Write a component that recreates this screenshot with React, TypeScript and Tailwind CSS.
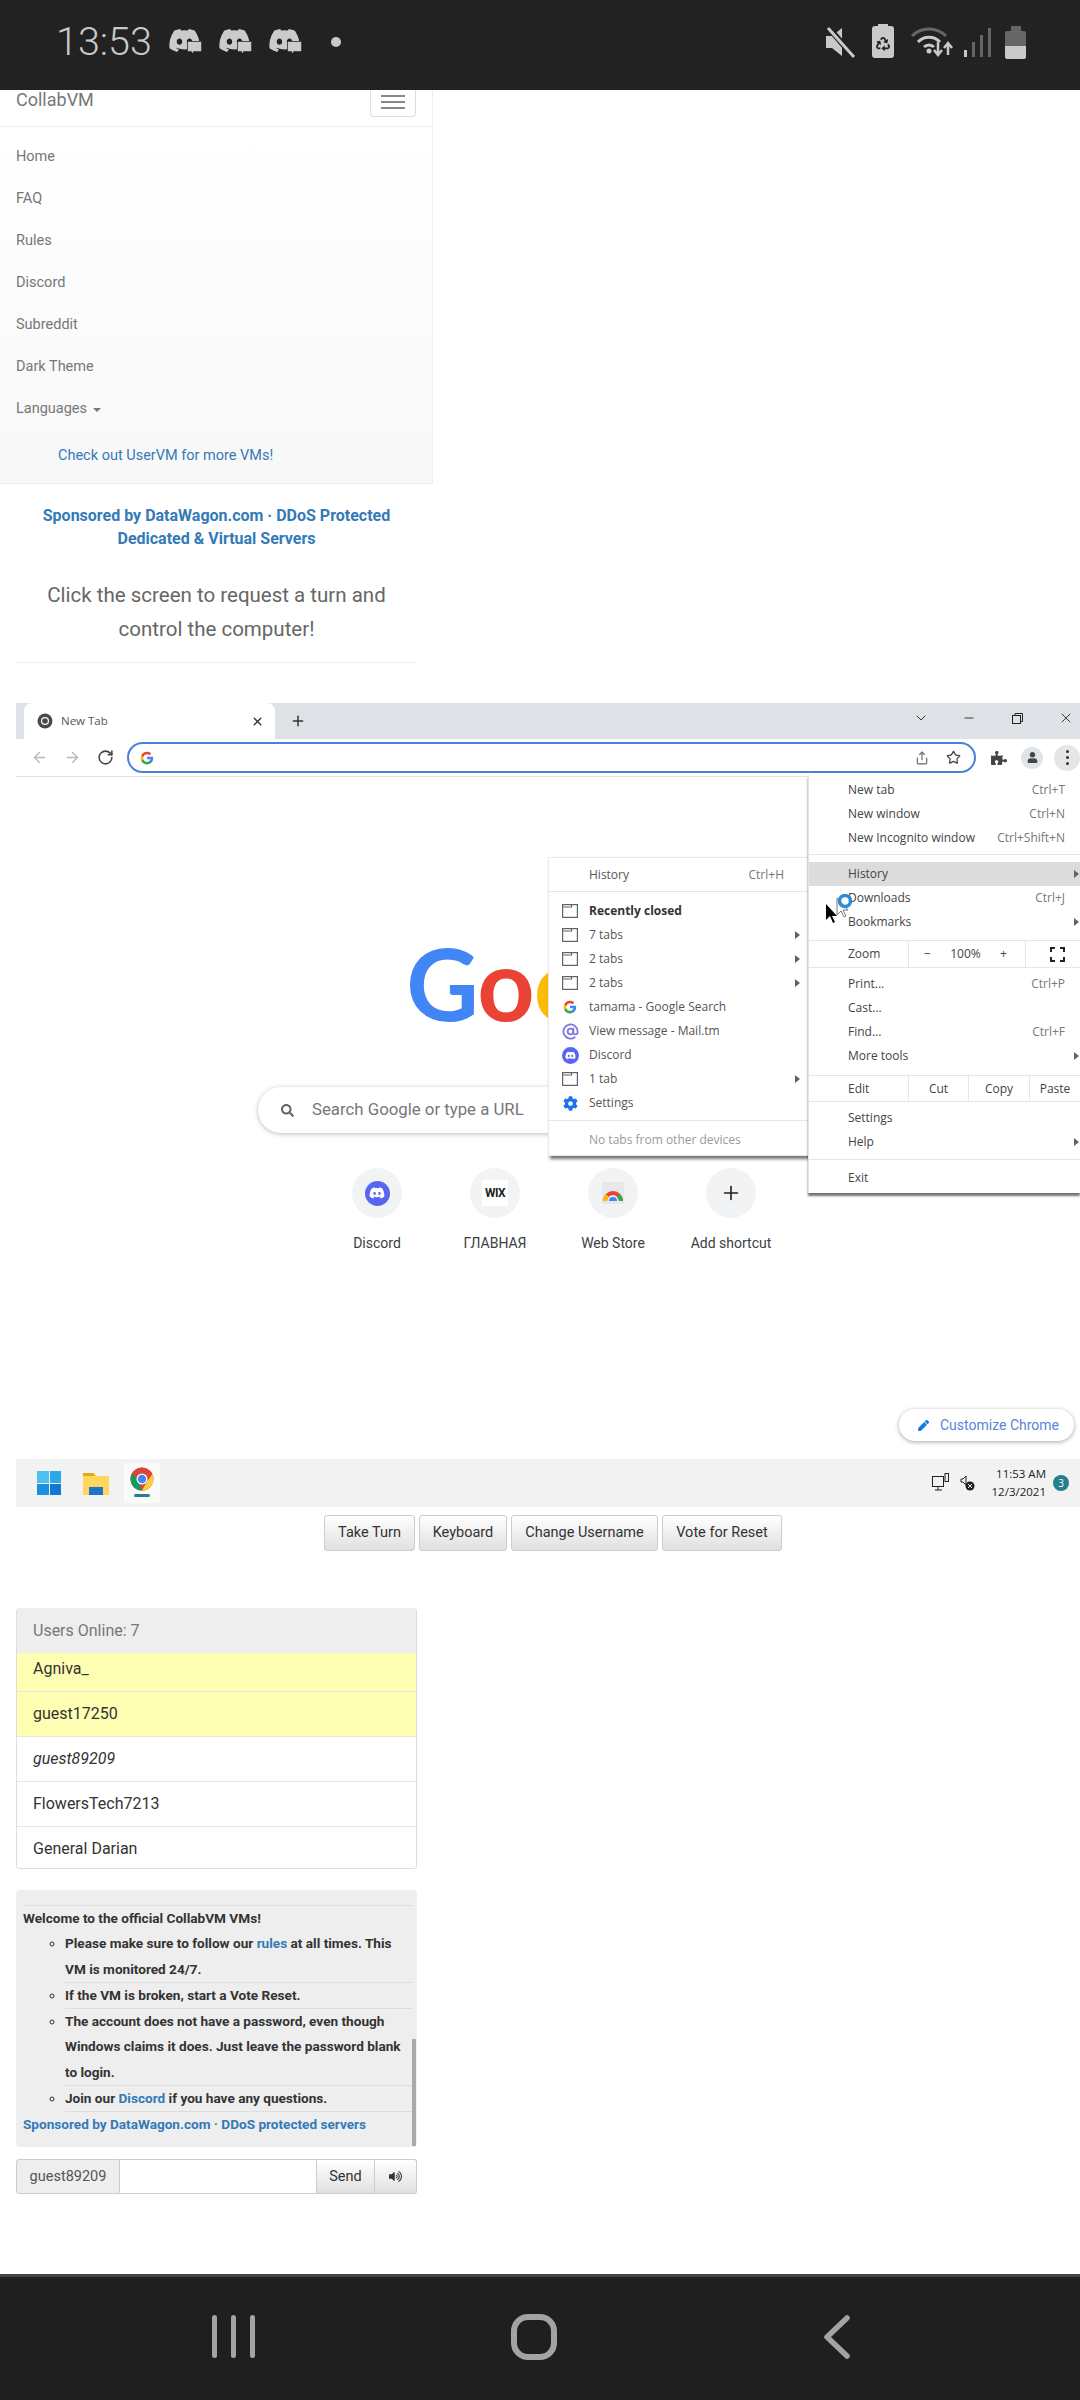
import React from "react"
import { FaDiscord, FaCog, FaVolumeUp, FaPuzzlePiece, FaUser, FaSearch, FaPen, FaRecycle } from "react-icons/fa"
import { ArrowLeft, ArrowRight, RotateCw, X, Plus, ChevronDown, Minus, Star, Share, AtSign } from "lucide-react"

const navLinks = ["Home", "FAQ", "Rules", "Discord", "Subreddit", "Dark Theme"]
const users = [
  { name: "Agniva_", cls: "bg-[#ffffb3] h-[39px] pb-[6px]" },
  { name: "guest17250", cls: "bg-[#ffffb3] h-[45px]" },
  { name: "guest89209", cls: "bg-white h-[45px] italic" },
  { name: "FlowersTech7213", cls: "bg-white h-[45px]" },
  { name: "General Darian", cls: "bg-white h-[41px] pt-[2px]" },
]
const shortcuts = ["Discord", "ГЛАВНАЯ", "Web Store", "Add shortcut"]
const actions = [
  { label: "Take Turn", w: "w-[91px]" },
  { label: "Keyboard", w: "w-[88px]" },
  { label: "Change Username", w: "w-[147px]" },
  { label: "Vote for Reset", w: "w-[120px]" },
]

const GoogleG = ({ size = 14 }: { size?: number }) => (
  <svg width={size} height={size} viewBox="0 0 48 48">
    <path fill="#4285F4" d="M45.1 24.5c0-1.6-.1-3.1-.4-4.5H24v8.5h11.8c-.5 2.7-2.1 5-4.4 6.6v5.5h7.1c4.2-3.8 6.6-9.5 6.6-16.1z" />
    <path fill="#34A853" d="M24 46c5.9 0 10.9-2 14.5-5.4l-7.1-5.5c-2 1.3-4.5 2.1-7.4 2.1-5.7 0-10.5-3.8-12.2-9H4.5v5.7C8.1 41.1 15.5 46 24 46z" />
    <path fill="#FBBC05" d="M11.8 28.7c-.4-1.3-.7-2.7-.7-4.2s.3-2.9.7-4.2v-5.7H4.5C3 17.5 2.2 20.900 2.2 24.500s.8 7 2.300 9.900l7.300-5.700z" />
    <path fill="#EA4335" d="M24 11.300c3.200 0 6.100 1.100 8.400 3.300l6.300-6.300C34.900 4.800 29.900 2.700 24 2.700 15.500 2.700 8.100 7.600 4.500 14.600l7.300 5.700c1.700-5.200 6.500-9 12.200-9z" />
  </svg>
)

const ChromeLogo = ({ size = 26 }: { size?: number }) => (
  <svg width={size} height={size} viewBox="0 0 48 48">
    <circle cx="24" cy="24" r="23" fill="#db4437" />
    <path fill="#0f9d58" d="M24 47C11.300 47 1 36.700 1 24c0-4 1-7.800 2.900-11.100L15 24l9 23z" />
    <path fill="#ffcd40" d="M24 47l10-18 10.900-14.900C46.200 17 47 20.400 47 24c0 12.700-10.300 23-23 23z" />
    <path fill="#db4437" d="M24 14h20.500L40 8 24 1 10 6l4 14z" />
    <circle cx="24" cy="24" r="11" fill="#fff" />
    <circle cx="24" cy="24" r="8.500" fill="#4285f4" />
  </svg>
)

const TabIcon = () => (
  <svg width="16" height="14" viewBox="0 0 16 14" fill="none" stroke="#5f6368" strokeWidth="1.200">
    <rect x="0.600" y="0.600" width="14.800" height="12.800" />
    <path d="M0.600 3h9V0.600" />
  </svg>
)

const Arrow = () => <div className="w-0 h-0 border-y-[4px] border-y-transparent border-l-[5px] border-l-[#5f6368]" />

const MenuRow = ({ label, hint, arrow, active }: { label: string; hint?: string; arrow?: boolean; active?: boolean }) => (
  <div className={`flex h-6 items-center justify-between pl-[39px] ${arrow ? "pr-[1px]" : "pr-[15px]"} ${active ? "bg-[#dcdcdc]" : ""}`}>
    <span>{label}</span>
    {hint && <span className="text-[#777]">{hint}</span>}
    {arrow && <Arrow />}
  </div>
)

const SubRow = ({ icon, label, hint, arrow, bold, muted }: { icon?: React.ReactNode; label: string; hint?: string; arrow?: boolean; bold?: boolean; muted?: boolean }) => (
  <div className="flex h-6 items-center">
    <div className="flex w-[40px] shrink-0 justify-center pl-[2px]">{icon}</div>
    <span className={`flex-1 ${bold ? "font-bold text-[#333]" : ""} ${muted ? "text-[#9a9a9a]" : ""}`}>{label}</span>
    {hint && <span className="pr-[26px] text-[#777]">{hint}</span>}
    {arrow && <div className="pr-[10px]"><Arrow /></div>}
  </div>
)

const ChromeMenu = () => (
  <div className="absolute right-0 top-[-2px] w-[272px] bg-white pt-[3px] pb-[3px] border-l border-[#e4e4e4] font-['Open_Sans',sans-serif] text-[12px] text-[#444] shadow-[0_3px_2px_rgba(0,0,0,0.55)]">
    <MenuRow label="New tab" hint="Ctrl+T" />
    <MenuRow label="New window" hint="Ctrl+N" />
    <MenuRow label="New Incognito window" hint="Ctrl+Shift+N" />
    <div className="mt-[4px] mb-[7px] border-t border-[#e6e6e6]" />
    <MenuRow label="History" arrow active />
    <MenuRow label="Downloads" hint="Ctrl+J" />
    <MenuRow label="Bookmarks" arrow />
    <div className="mt-[6px] border-t border-[#e6e6e6]" />
    <div className="flex h-[26px] items-center">
      <span className="w-[99px] pl-[39px]">Zoom</span>
      <div className="flex h-full w-[117px] items-center justify-between border-l border-[#e6e6e6] pl-[15px] pr-[18px]">
        <span>−</span>
        <span>100%</span>
        <span>+</span>
      </div>
      <div className="flex h-full flex-1 items-center justify-center border-l border-[#e6e6e6] pl-[8px]">
        <svg width="15" height="15" viewBox="0 0 15 15" fill="none" stroke="#222" strokeWidth="2">
          <path d="M1 5V1h4M10 1h4v4M14 10v4h-4M5 14H1v-4" />
        </svg>
      </div>
    </div>
    <div className="mb-[4px] border-t border-[#e6e6e6]" />
    <MenuRow label="Print..." hint="Ctrl+P" />
    <MenuRow label="Cast..." />
    <MenuRow label="Find..." hint="Ctrl+F" />
    <MenuRow label="More tools" arrow />
    <div className="mt-[7px] border-t border-[#e6e6e6]" />
    <div className="flex h-[25px] items-center">
      <span className="w-[99px] pl-[39px]">Edit</span>
      <span className="flex h-full w-[60px] items-center justify-center border-l border-[#e6e6e6]">Cut</span>
      <span className="flex h-full w-[61px] items-center justify-center border-l border-[#e6e6e6]">Copy</span>
      <span className="flex h-full flex-1 items-center justify-center border-l border-[#e6e6e6]">Paste</span>
    </div>
    <div className="mb-[4px] border-t border-[#e6e6e6]" />
    <MenuRow label="Settings" />
    <MenuRow label="Help" arrow />
    <div className="mt-[5px] mb-[6px] border-t border-[#e6e6e6]" />
    <MenuRow label="Exit" />
  </div>
)

const HistoryMenu = () => (
  <div className="absolute left-[532px] top-[80px] w-[263px] bg-white pt-[5px] pb-[3px] border border-[#e8e8e8] font-['Open_Sans',sans-serif] text-[12px] text-[#555] shadow-[2px_3px_3px_rgba(0,0,0,0.55)]">
    <SubRow label="History" hint="Ctrl+H" />
    <div className="mt-[4px] mb-[7px] border-t border-[#e6e6e6]" />
    <SubRow icon={<TabIcon />} label="Recently closed" bold />
    <SubRow icon={<TabIcon />} label="7 tabs" arrow />
    <SubRow icon={<TabIcon />} label="2 tabs" arrow />
    <SubRow icon={<TabIcon />} label="2 tabs" arrow />
    <SubRow icon={<GoogleG />} label="tamama - Google Search" />
    <SubRow icon={<AtSign size={17} strokeWidth={2.500} className="text-[#7b78de]" />} label="View message - Mail.tm" />
    <SubRow
      icon={<div className="flex h-[17px] w-[17px] items-center justify-center rounded-full bg-[#5865f2]"><FaDiscord size={11} color="#fff" /></div>}
      label="Discord"
    />
    <SubRow icon={<TabIcon />} label="1 tab" arrow />
    <SubRow icon={<FaCog size={15} color="#1a73e8" />} label="Settings" />
    <div className="mt-[5px] mb-[7px] border-t border-[#e6e6e6]" />
    <SubRow label="No tabs from other devices" muted />
  </div>
)

const NewTabPage = () => (
  <div className="relative h-[682px] bg-white">
    <div className="flex flex-col items-center">
      <div className="mt-[147px] h-[117px] pl-[28px] font-['Lato',sans-serif] text-[100px] font-bold leading-[117px] tracking-[-1px]">
        <span className="text-[#4285f4]">G</span>
        <span className="text-[#ea4335]">o</span>
        <span className="text-[#fbbc05]">o</span>
        <span className="text-[#4285f4]">g</span>
        <span className="text-[#34a853]">l</span>
        <span className="text-[#ea4335]">e</span>
      </div>
      <div className="mt-[46px] flex h-[46px] w-[580px] items-center rounded-full bg-white pl-[23px] shadow-[0_1px_5px_rgba(32,33,36,0.3)] font-['Roboto',sans-serif] text-[16.800px] text-[#75777a]">
        <FaSearch size={13} color="#666" />
        <span className="ml-[18px]">Search Google or type a URL</span>
      </div>
      <div className="mt-[35px] ml-[12px] flex font-['Roboto',sans-serif] text-[14px] text-[#3c4043]">
        {shortcuts.map((s, i) => (
          <div key={s} className="flex w-[118px] flex-col items-center">
            <div className="flex h-[50px] w-[50px] items-center justify-center rounded-full bg-[#f1f3f4]">
              {i === 0 && <div className="flex h-[25px] w-[25px] items-center justify-center rounded-full bg-[#5865f2]"><FaDiscord size={16} color="#fff" /></div>}
              {i === 1 && <div className="flex h-[26px] w-[26px] items-center justify-center bg-white text-[12px] font-bold tracking-[-0.500px] text-[#222]">WIX</div>}
              {i === 2 && (
                <svg width="24" height="24" viewBox="0 0 24 24">
                  <rect x="1" y="1" width="22" height="22" fill="#e8e8e8" />
                  <path d="M2 20a10 10 0 0 1 20 0h-4a6 6 0 0 0-12 0z" fill="#ea4335" />
                  <path d="M2 20a10 10 0 0 1 3-7l3 3a6 6 0 0 0-2 4z" fill="#fbbc05" />
                  <path d="M22 20a10 10 0 0 0-3-7l-3 3a6 6 0 0 1 2 4z" fill="#34a853" />
                  <path d="M8 20a4 4 0 0 1 8 0z" fill="#4285f4" />
                </svg>
              )}
              {i === 3 && <Plus size={22} strokeWidth={1.800} color="#222" />}
            </div>
            <span className="mt-[17px] leading-[16px]">{s}</span>
          </div>
        ))}
      </div>
    </div>
    <HistoryMenu />
    <ChromeMenu />
    {/* pointer caught in the middle of a click */}
    <div className="absolute left-[808px] top-[117px]">
      <svg width="32" height="32" viewBox="0 0 32 32">
        <path d="M2 10v16l4-4 3 7 2-1-3-6h5z" fill="#000" />
        <path d="M13 4v17l4-4 3 6 2-1-3-6h5z" fill="#fff" stroke="#777" />
        <circle cx="21" cy="7" r="5.500" fill="none" stroke="#2b8fd8" strokeWidth="3.500" />
      </svg>
    </div>
    <div className="absolute right-[6px] bottom-[18px] flex h-[32px] w-[175px] items-center rounded-full bg-white pl-[19px] shadow-[0_1px_4px_rgba(32,33,36,0.4)] font-['Roboto',sans-serif] text-[14px] text-[#5b84d8]">
      <FaPen size={11} color="#1a73e8" />
      <span className="ml-[11px]">Customize Chrome</span>
    </div>
  </div>
)

const Taskbar = () => (
  <div className="flex h-[48px] items-center justify-between bg-[#f2f2f2] font-['Open_Sans',sans-serif]">
    <div className="flex items-center pl-[21px]">
      <div className="grid h-[24px] w-[24px] grid-cols-2 gap-[1px]">
        <div className="bg-[#4cc2f1]" />
        <div className="bg-[#2fa8ea]" />
        <div className="bg-[#1c8fe0]" />
        <div className="bg-[#0f78d4]" />
      </div>
      <svg className="ml-[22px]" width="26" height="24" viewBox="0 0 26 24">
        <path d="M0 2h11l3 3h12v19H0z" fill="#ffd75e" />
        <path d="M0 2h10l2 3H0z" fill="#e5a812" />
        <rect x="6" y="16" width="14" height="8" fill="#1b74c5" />
      </svg>
      <div className="ml-[15px] flex h-[40px] w-[36px] flex-col items-center rounded-[3px] bg-[#fafafa] pt-[4px]">
        <ChromeLogo size={24} />
        <div className="mt-[3px] h-[3px] w-[16px] rounded-full bg-[#2d7d8a]" />
      </div>
    </div>
    <div className="flex items-center pr-[11px] text-[#222]">
      <svg width="18" height="20" viewBox="0 0 18 20" fill="none" stroke="#222">
        <rect x="0.500" y="3.500" width="11" height="10" />
        <rect x="13" y="0.500" width="3.500" height="8" />
        <path d="M3 17h7M6 14v3" />
      </svg>
      <svg className="ml-[10px]" width="16" height="18" viewBox="0 0 16 18">
        <path d="M1 5h2l3-3v9L3 8H1z" fill="none" stroke="#222" />
        <circle cx="10" cy="12" r="4.500" fill="#222" />
        <path d="M8 10l4 4M12 10l-4 4" stroke="#f2f2f2" />
      </svg>
      <div className="ml-[16px] flex flex-col items-end text-[11.500px] leading-[18px]">
        <span>11:53 AM</span>
        <span>12/3/2021</span>
      </div>
      <div className="ml-[7px] flex h-[16px] w-[16px] items-center justify-center rounded-full bg-[#237f8c] text-[10px] text-white">3</div>
    </div>
  </div>
)

const ChromeGray = () => (
  <svg width="16" height="16" viewBox="0 0 16 16">
    <circle cx="8" cy="8" r="7.500" fill="#4a4a4a" />
    <circle cx="8" cy="8" r="4" fill="#fff" />
    <circle cx="8" cy="8" r="2.800" fill="#4a4a4a" />
  </svg>
)

const VmScreen = () => (
  <div className="ml-[16px] h-[804px] overflow-hidden">
    <div className="flex h-[36px] items-end bg-[#dee1e6] pl-[8px]">
      <div className="flex h-[36px] w-[251px] items-center rounded-t-[8px] bg-white pl-[13px] pr-[11px] font-['Open_Sans',sans-serif] text-[11.500px] text-[#555]">
        <ChromeGray />
        <span className="ml-[8px] flex-1">New Tab</span>
        <X size={13} strokeWidth={2.500} color="#333" />
      </div>
      <Plus size={16} strokeWidth={2.200} color="#333" className="mb-[10px] ml-[15px]" />
      <div className="ml-auto flex h-full items-center pb-[6px]">
        <ChevronDown size={16} strokeWidth={1.500} color="#333" />
        <Minus size={14} strokeWidth={1.500} color="#222" className="ml-[33px]" />
        <svg className="ml-[36px]" width="11" height="11" viewBox="0 0 11 11" fill="none" stroke="#222">
          <rect x="0.500" y="2.500" width="8" height="8" />
          <path d="M3 2.500V0.500h7.500v8H8.500" />
        </svg>
        <X size={16} strokeWidth={1.300} color="#222" className="ml-[35px] mr-[6px]" />
      </div>
    </div>
    <div className="flex h-[38px] items-center border-b border-[#e2e2e2] bg-white pl-[15px]">
      <ArrowLeft size={17} strokeWidth={1.800} color="#b7b7b7" />
      <ArrowRight size={17} strokeWidth={1.800} color="#b7b7b7" className="ml-[16px]" />
      <RotateCw size={17} strokeWidth={2.200} color="#444" className="ml-[16px]" />
      <div className="ml-[13px] flex h-[31px] w-[851px] items-center rounded-full border-2 border-[#4a80d8] pl-[11px] pr-[13px]">
        <GoogleG />
        <Share size={14} color="#666" className="ml-auto" />
        <Star size={15} strokeWidth={2} color="#444" className="ml-[17px]" />
      </div>
      <FaPuzzlePiece size={16} color="#444" className="ml-[15px]" />
      <div className="ml-[14px] flex h-[22px] w-[22px] items-center justify-center rounded-full bg-[#dfe3ea]">
        <FaUser size={11} color="#444" />
      </div>
      <div className="ml-[11px] flex h-[26px] w-[26px] flex-col items-center justify-center gap-[3px] rounded-full bg-[#e6e6e6]">
        <div className="h-[3px] w-[3px] rounded-full bg-[#333]" />
        <div className="h-[3px] w-[3px] rounded-full bg-[#333]" />
        <div className="h-[3px] w-[3px] rounded-full bg-[#333]" />
      </div>
    </div>
    <NewTabPage />
    <Taskbar />
  </div>
)

const NotifIcon = () => (
  <div className="relative h-[30px] w-[32px]">
    <FaDiscord size={33} color="#cbcbcb" className="absolute left-0 top-[-3px]" />
    <svg className="absolute left-[19px] top-[14px]" width="15" height="15" viewBox="0 0 15 15">
      <path d="M0 0h15v11H7l-2 3-1-3H0z" fill="#cbcbcb" stroke="#222" strokeWidth="1.500" />
    </svg>
  </div>
)

const StatusBar = () => (
  <div className="flex h-[90px] shrink-0 items-center justify-between bg-[#222] pb-[6px] pl-[56px] pr-[54px] text-[#c9c9c9]">
    <div className="flex items-center">
      <span className="font-['Roboto',sans-serif] text-[39.500px] font-light leading-none">13:53</span>
      <div className="ml-[16px] flex items-center gap-[18px]">
        <NotifIcon />
        <NotifIcon />
        <NotifIcon />
      </div>
      <div className="ml-[31px] h-[10px] w-[10px] rounded-full bg-[#c9c9c9]" />
    </div>
    <div className="flex items-center">
      <svg width="30" height="32" viewBox="0 0 30 32">
        <path d="M0 10h6L16 2v28L6 22H0z" fill="#c9c9c9" />
        <path d="M2 1l26 30" stroke="#222" strokeWidth="6" />
        <path d="M2 2l26 29" stroke="#c9c9c9" strokeWidth="3" />
      </svg>
      <div className="relative ml-[16px] flex h-[32px] w-[22px] items-center justify-center rounded-[3px] bg-[#c9c9c9] pt-[3px]">
        <div className="absolute top-[-2px] h-[4px] w-[10px] bg-[#c9c9c9]" />
        <FaRecycle size={14} color="#222" />
      </div>
      <svg className="ml-[17px]" width="42" height="32" viewBox="0 0 42 32" fill="none">
        <path d="M1 10a24 24 0 0 1 34 0" stroke="#666" strokeWidth="3" />
        <path d="M7 16a15 15 0 0 1 22 0" stroke="#c9c9c9" strokeWidth="3" />
        <path d="M13 21a7 7 0 0 1 10 0" stroke="#c9c9c9" strokeWidth="3" />
        <circle cx="18" cy="25" r="2.500" fill="#c9c9c9" />
        <path d="M27 16v12M23 24l4 5 4-5M37 29V18M33 22l4-5 4 5" stroke="#c9c9c9" strokeWidth="2.500" />
      </svg>
      <svg className="ml-[11px]" width="27" height="32" viewBox="0 0 27 32">
        <rect x="0" y="24" width="3" height="7" fill="#c9c9c9" />
        <rect x="8" y="16" width="3" height="15" fill="#666" />
        <rect x="16" y="9" width="3" height="22" fill="#666" />
        <rect x="24" y="2" width="3" height="29" fill="#666" />
      </svg>
      <div className="ml-[14px] flex flex-col items-center">
        <div className="h-[5px] w-[10px] bg-[#666]" />
        <div className="flex h-[28px] w-[21px] flex-col overflow-hidden rounded-[2px]">
          <div className="h-[15px] bg-[#666]" />
          <div className="flex-1 bg-[#c9c9c9]" />
        </div>
      </div>
    </div>
  </div>
)

const NavigationBar = () => (
  <div className="flex h-[126px] shrink-0 items-center border-t-[3px] border-[#444] bg-[#1f1f1f] pl-[212px] pb-[4px]">
    <div className="flex gap-[14px]">
      <div className="h-[43px] w-[5px] rounded-full bg-[#a3a3a3]" />
      <div className="h-[43px] w-[5px] rounded-full bg-[#a3a3a3]" />
      <div className="h-[43px] w-[5px] rounded-full bg-[#a3a3a3]" />
    </div>
    <div className="ml-[256px] h-[46px] w-[46px] rounded-[17px] border-[6px] border-[#a3a3a3]" />
    <svg className="ml-[267px]" width="26" height="44" viewBox="0 0 26 44" fill="none" stroke="#a3a3a3" strokeWidth="5.500" strokeLinecap="round" strokeLinejoin="round">
      <path d="M23 3L3 22l20 19" />
    </svg>
  </div>
)

const App = () => {
  return (
    <div className="flex h-[2400px] w-[1080px] flex-col overflow-hidden bg-white font-['Roboto',sans-serif]">
      <StatusBar />
      <div className="flex-1 overflow-hidden">
        <section className="w-[433px] text-[14.500px] text-[#777]">
          <div className="flex h-[37px] items-start justify-between border-b border-[#eee] border-r pl-[16px] pr-[16px]">
            <span className="text-[18px] leading-[19px]">CollabVM</span>
            <div className="flex h-[27px] w-[46px] flex-col items-center justify-end gap-[4px] rounded-b-[4px] border border-t-0 border-[#ddd] pb-[7px]">
              <div className="h-[2px] w-[24px] bg-[#888]" />
              <div className="h-[2px] w-[24px] bg-[#888]" />
              <div className="h-[2px] w-[24px] bg-[#888]" />
            </div>
          </div>
          <div className="border-r border-b border-[#eee] bg-gradient-to-b from-white to-[#f8f8f8] pt-[9px] pb-[6px]">
            <ul>
              {navLinks.map((link) => (
                <li key={link} className="flex h-[42px] items-center pl-[16px]">{link}</li>
              ))}
              <li className="flex h-[42px] items-center pl-[16px]">
                Languages
                <span className="ml-[6px] mt-[1px] h-0 w-0 border-x-[4px] border-t-[4px] border-x-transparent border-t-[#777]" />
              </li>
            </ul>
            <div className="mt-[5px] flex h-[42px] items-center pl-[58px] text-[#337ab7]">Check out UserVM for more VMs!</div>
          </div>
        </section>
        <div className="w-[433px] text-center">
          <p className="mt-[20px] px-[30px] text-[16px] font-bold leading-[23px] text-[#337ab7]">Sponsored by DataWagon.com · DDoS Protected Dedicated &amp; Virtual Servers</p>
          <p className="mt-[28px] px-[30px] text-[20.500px] leading-[34px] text-[#666]">Click the screen to request a turn and control the computer!</p>
        </div>
        <div className="ml-[16px] mt-[16px] w-[400px] border-t border-[#eee]" />
        <div className="mt-[40px]">
          <VmScreen />
        </div>
        <div className="mt-[8px] flex gap-[4px] pl-[324px] text-[14.500px] text-[#333]">
          {actions.map((a) => (
            <button key={a.label} className={`h-[36px] ${a.w} rounded-[3px] border border-[#ccc] bg-gradient-to-b from-white to-[#e0e0e0]`}>{a.label}</button>
          ))}
        </div>
        <section className="ml-[16px] mt-[57px] w-[401px] overflow-hidden rounded-[4px] border-x border-b border-[#ddd] text-[16px] text-[#333]">
          <div className="flex h-[45px] items-center bg-[#eee] pl-[16px] text-[#777]">Users Online: 7</div>
          {users.map((u) => (
            <div key={u.name} className={`flex items-center border-b border-[#e6e6e6] pl-[16px] last:border-b-0 ${u.cls}`}>{u.name}</div>
          ))}
        </section>
        <section className="relative ml-[16px] mt-[21px] h-[257px] w-[401px] rounded-[4px] bg-[#eee] pl-[7px] pr-[5px] pt-[15px] text-[13.600px] font-bold leading-[25.300px] text-[#333]">
          <div className="border-t border-[#ddd]">Welcome to the official CollabVM VMs!</div>
          <ul className="list-[circle] pl-[42px]">
            <li className="border-b border-[#ddd]">Please make sure to follow our <span className="text-[#337ab7]">rules</span> at all times. This VM is monitored 24/7.</li>
            <li className="border-b border-[#ddd]">If the VM is broken, start a Vote Reset.</li>
            <li className="border-b border-[#ddd]">The account does not have a password, even though Windows claims it does. Just leave the password blank to login.</li>
            <li className="border-b border-[#ddd]">Join our <span className="text-[#337ab7]">Discord</span> if you have any questions.</li>
          </ul>
          <div className="text-[#337ab7]">Sponsored by DataWagon.com · DDoS protected servers</div>
          <div className="absolute right-[1px] bottom-[1px] h-[107px] w-[4px] bg-[#aaa]" />
        </section>
        <div className="ml-[16px] mt-[12px] flex h-[35px] w-[401px] text-[14.500px] text-[#555]">
          <div className="flex w-[104px] items-center justify-center rounded-l-[3px] border border-[#ccc] bg-[#eee]">guest89209</div>
          <div className="flex-1 border-y border-[#ccc] bg-white" />
          <div className="flex w-[59px] items-center justify-center border border-[#ccc] bg-gradient-to-b from-white to-[#e0e0e0] text-[#333]">Send</div>
          <div className="flex w-[42px] items-center justify-center rounded-r-[3px] border-y border-r border-[#ccc] bg-gradient-to-b from-white to-[#e0e0e0]">
            <FaVolumeUp size={13} color="#333" />
          </div>
        </div>
      </div>
      <NavigationBar />
    </div>
  )
}

export default App
